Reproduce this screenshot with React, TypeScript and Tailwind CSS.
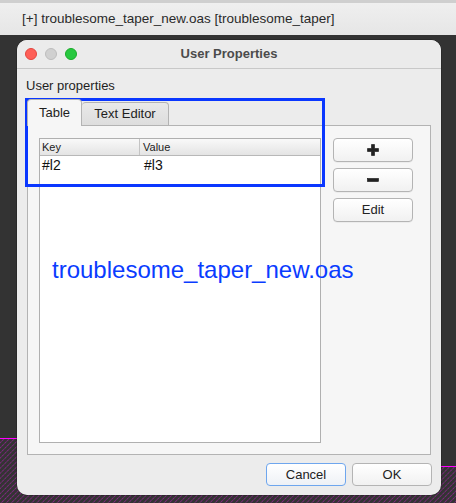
import React from 'react';

const font = { fontFamily: '"Liberation Sans", Arial, sans-serif' };

function Hatch() {
  // magenta hatched layout area behind the dialog
  return (
    <svg className="absolute inset-0" width="456" height="468" viewBox="0 0 456 468">
      <defs>
        <pattern id="hatch" width="3.6" height="3.6" patternUnits="userSpaceOnUse" patternTransform="rotate(45)">
          <line x1="0" y1="0" x2="0" y2="3.6" stroke="#d21ad2" strokeWidth="0.9" strokeDasharray="1.4 0.8" />
        </pattern>
      </defs>
      <path d="M0 403 H240 V431 H456 V468 H0 Z" fill="url(#hatch)" />
      <path d="M0 403.5 H240 V431.5 H456" fill="none" stroke="#ff00ff" strokeWidth="1" />
    </svg>
  );
}

function SideButton({ children }: { children: React.ReactNode }) {
  return (
    <button className="w-[80px] h-[24px] rounded-[4px] border border-[#b4b4b4] bg-gradient-to-b from-white to-[#f1f1f1] flex items-center justify-center text-[13px] text-[#222] shadow-[0_0.5px_0.5px_rgba(0,0,0,0.08)]">
      {children}
    </button>
  );
}

export default function App() {
  return (
    <div className="w-[456px] h-[503px] bg-[#333333] flex flex-col overflow-hidden" style={font}>
      <div className="h-[35px] shrink-0 border-t-[3px] border-[#cfcfcf] bg-gradient-to-b from-[#efefef] to-[#e6e6e6] flex items-center pl-[22px] text-[13.5px] text-[#2a2a2a]">
        [+] troublesome_taper_new.oas [troublesome_taper]
      </div>

      <div className="relative flex-1">
        <Hatch />

        <div className="relative ml-[17px] mt-[5px] w-[424px] h-[455px] rounded-[10px] bg-[#ececec] flex flex-col overflow-hidden shadow-[0_0_0_0.5px_rgba(0,0,0,0.35)]">
          <div className="h-[29px] shrink-0 border-b border-[#c8c8c8] bg-[#ebebeb] grid grid-cols-[1fr_auto_1fr] items-center">
            <div className="flex items-center gap-[8px] pl-[8px]">
              <span className="w-[12px] h-[12px] rounded-full bg-[#fe5f57] border border-[#e2463f]" />
              <span className="w-[12px] h-[12px] rounded-full bg-[#d0d0d0] border border-[#bcbcbc]" />
              <span className="w-[12px] h-[12px] rounded-full bg-[#28c840] border border-[#1aab29]" />
            </div>
            <div className="text-[13px] font-bold text-[#4b4b4b]">User Properties</div>
            <div />
          </div>

          <div className="flex-1 flex flex-col px-[10px] pt-[9px]">
            <div className="h-[16px] leading-[16px] text-[13px] text-[#1e1e1e] -ml-px">User properties</div>

            <div className="mt-[5px] flex items-end relative z-10 -mb-px">
              <div className="w-[55px] h-[27px] rounded-t-[4px] border border-b-0 border-[#b3b3b3] bg-[#f6f6f6] flex items-center justify-center text-[13px] text-[#1e1e1e]">
                Table
              </div>
              <div className="w-[87px] h-[24px] rounded-t-[4px] border border-l-0 border-[#b3b3b3] bg-gradient-to-b from-[#e9e9e9] to-[#dddddd] flex items-center justify-center text-[13px] text-[#1e1e1e]">
                Text Editor
              </div>
            </div>

            <div className="h-[330px] border border-[#b3b3b3] bg-[#f6f6f6] flex gap-[12px] pl-[11px] pt-[12px]">
              <div className="w-[282px] h-[305px] border border-[#b0b0b0] bg-white flex flex-col">
                <div className="h-[17px] border-b border-[#b8b8b8] bg-gradient-to-b from-[#f9f9f9] to-[#e4e4e4] flex text-[11px] text-[#222]">
                  <div className="w-[100px] border-r border-[#c4c4c4] pl-[2px] leading-[16px]">Key</div>
                  <div className="flex-1 pl-[3px] leading-[16px]">Value</div>
                </div>
                <div className="h-[19px] flex text-[14px] text-[#111]">
                  <div className="w-[100px] pl-[2px] leading-[19px]">#l2</div>
                  <div className="flex-1 pl-[4px] leading-[19px]">#l3</div>
                </div>
              </div>

              <div className="flex flex-col gap-[6px]">
                <SideButton>
                  <svg width="12" height="12" viewBox="0 0 12 12">
                    <path d="M4.5 0.5h3v4h4v3h-4v4h-3v-4h-4v-3h4z" fill="#222" stroke="#111" strokeWidth="0.6" />
                  </svg>
                </SideButton>
                <SideButton>
                  <svg width="12" height="12" viewBox="0 0 12 12">
                    <rect x="0.5" y="4.5" width="11" height="3" fill="#222" stroke="#111" strokeWidth="0.6" />
                  </svg>
                </SideButton>
                <SideButton>Edit</SideButton>
              </div>
            </div>

            <div className="mt-[8px] flex justify-end gap-[6px] -mr-px">
              <button className="w-[80px] h-[23px] rounded-[4px] border border-[#6ea6ee] bg-gradient-to-b from-white to-[#eef1f6] text-[13px] text-[#222] flex items-center justify-center">
                Cancel
              </button>
              <button className="w-[80px] h-[23px] rounded-[4px] border border-[#b4b4b4] bg-gradient-to-b from-white to-[#f1f1f1] text-[13px] text-[#222] flex items-center justify-center">
                OK
              </button>
            </div>
          </div>
        </div>

        {/* annotation overlay */}
        <div className="absolute left-[25px] top-[63px] w-[300px] h-[89px] border-[3px] border-[#0a37ff]" />
        <div className="absolute left-[52px] top-[221px] text-[24px] leading-[28px] text-[#0a3cff]">troublesome_taper_new.oas</div>
      </div>
    </div>
  );
}
